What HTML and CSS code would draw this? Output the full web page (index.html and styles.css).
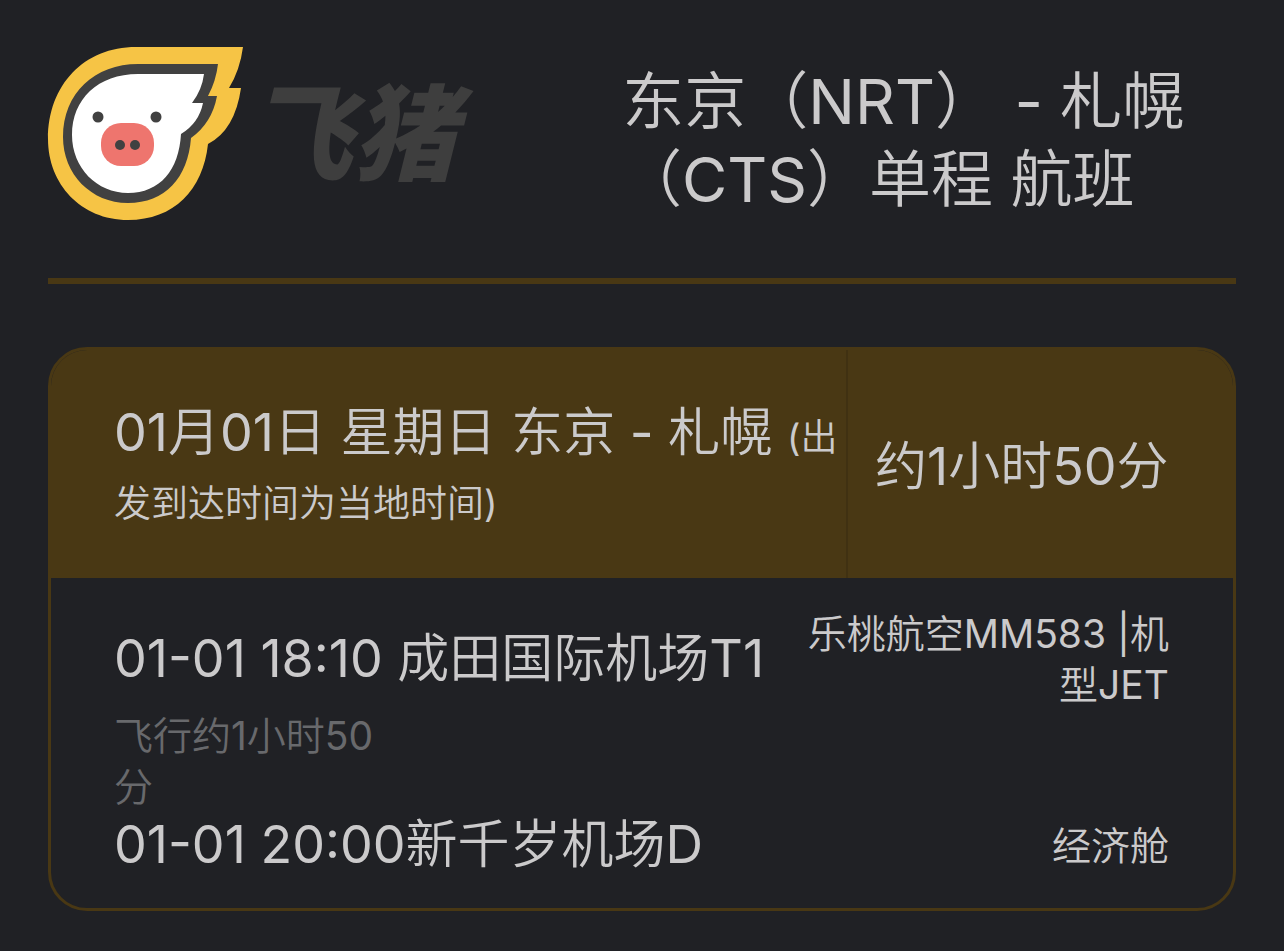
FILE: index.html
```html
<!DOCTYPE html>
<html lang="zh-CN">
<head>
<meta charset="utf-8">
<meta name="viewport" content="width=device-width, initial-scale=1">
<title>东京 - 札幌 航班</title>
<link rel="stylesheet" href="styles.css">
</head>
<body>
<header class="top">
  <svg class="logo" viewBox="0 0 426 174" role="img" aria-label="飞猪">
    <path fill="#f6c445" d="M88 0H195Q192 23 181 41H193Q187 83 160 97C155 143 126 173 80 173C33 173 0 137 0 92C0 38 36 0 88 0Z"/>
    <path fill="#414141" d="M90 17H170Q168 34 160 49H169Q164 76 143 91C140 131 117 156 80 156C43 156 15 127 15 90C15 46 47 17 90 17Z"/>
    <path fill="#fff" d="M90 27H156Q154 43 144 56H155Q151 76 133 87C131 123 112 146 80 146C49 146 24 121 24 88C24 52 50 27 90 27Z"/>
    <circle cx="50" cy="70" r="5.500" fill="#414141"/>
    <circle cx="108" cy="70" r="5.500" fill="#414141"/>
    <rect x="53" y="76" width="53" height="43" rx="20" fill="#ee756e"/>
    <circle cx="72" cy="98" r="5" fill="#414141"/>
    <circle cx="87" cy="98" r="5" fill="#414141"/>
    <text class="logo-word" x="200" y="125">飞猪</text>
  </svg>
  <h1 class="title">东京（NRT） - 札幌（CTS）单程 航班&nbsp;&nbsp;&nbsp;</h1>
</header>
<main class="card">
  <div class="summary">
    <h2 class="route">01月01日 星期日 东京 - 札幌 <small class="note">(出发到达时间为当地时间)</small></h2>
    <div class="total">约1小时50分</div>
  </div>
  <div class="flight">
    <div class="stop">01-01 18:10 成田国际机场T1</div>
    <div class="detail">乐桃航空MM583 |机型JET</div>
    <div class="duration">飞行约1小时50分</div>
    <div class="stop">01-01 20:00新千岁机场D</div>
    <div class="detail">经济舱</div>
  </div>
</main>
</body>
</html>
```
FILE: styles.css
```css
* { box-sizing: border-box; }
body {
  margin: 0;
  padding: 47px 48px 40px;
  background: #202125;
  color: #cbcacb;
  font-family: Inter, "Noto Sans CJK SC DemiLight", "Noto Sans CJK SC", sans-serif;
  font-weight: 400;
}
.top {
  display: flex;
  justify-content: space-between;
  align-items: flex-start;
  padding-bottom: 57px;
  border-bottom: 6px solid #493814;
}
.logo { flex: none; width: 426px; height: 174px; overflow: visible; }
.logo-word {
  font-family: "Noto Sans CJK SC", sans-serif;
  font-size: 104px;
  font-weight: 900;
  font-style: italic;
  fill: #3e3e3e;
}
.title {
  width: 56%;
  margin: 0;
  padding-top: 16px;
  font-size: 62px;
  line-height: 78px;
  font-weight: 400;
  text-align: center;
}
.card {
  margin-top: 63px;
  border: 3px solid #493814;
  border-radius: 39px;
  overflow: hidden;
}
.summary {
  display: flex;
  min-height: 228px;
  background: #493814;
}
.route {
  flex: 1;
  margin: 0;
  padding: 50px 0 0 63px;
  font-size: 52px;
  line-height: 66px;
  font-weight: 400;
}
.note { font-size: 37px; line-height: 51px; }
.total {
  display: flex;
  align-items: center;
  flex: none;
  width: 387px;
  padding: 0 0 4px 27px;
  border-left: 2px solid #403112;
  font-size: 52px;
}
.flight {
  display: grid;
  grid-template-columns: 1fr 370px;
  align-items: center;
  padding: 30px 64px 30px 63px;
}
.stop { font-size: 52px; line-height: 66px; white-space: nowrap; }
.detail { font-size: 39px; line-height: 51px; text-align: right; }
.duration {
  grid-column: 1 / -1;
  width: 270px;
  font-size: 39px;
  line-height: 51px;
  color: #68696c;
}
```
